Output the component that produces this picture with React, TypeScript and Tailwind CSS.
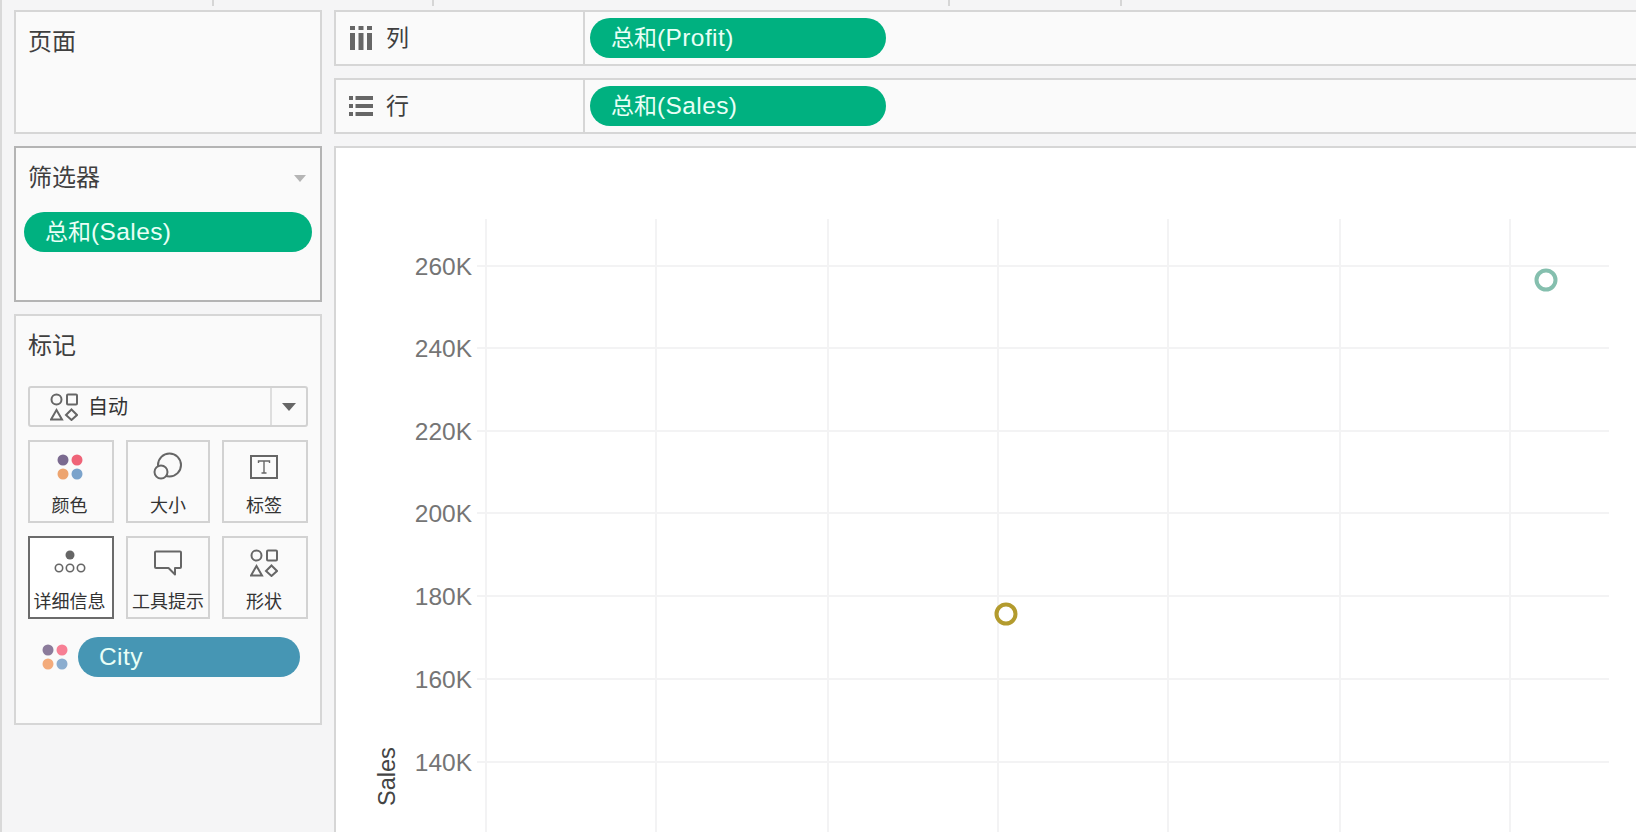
import React from "react";

const FONT = "font-['Liberation_Sans','Noto_Sans_CJK_SC',sans-serif]";

function Dots({ muted = false }: { muted?: boolean }) {
  const c = muted ? ["#8b7b9b", "#f77f94", "#f3ab7b", "#8badcf"] : ["#7a6a8f", "#ef6478", "#eda46f", "#7ba3cb"];
  return (
    <svg width="26" height="26" viewBox="0 0 26 26">
      <circle cx="6" cy="6" r="5.5" fill={c[0]} />
      <circle cx="20" cy="6" r="5.5" fill={c[1]} />
      <circle cx="6" cy="20" r="5.5" fill={c[2]} />
      <circle cx="20" cy="20" r="5.5" fill={c[3]} />
    </svg>
  );
}

function Shapes() {
  return (
    <svg width="28" height="28" viewBox="0 0 28 28" fill="none" stroke="#666" strokeWidth="2">
      <circle cx="6.5" cy="6.5" r="5" />
      <rect x="17" y="1.5" width="10" height="10" rx="1" />
      <path d="M6.5 17 L12 26.5 L1 26.5 Z" />
      <path d="M21.5 16.5 L27 22 L21.5 27 L16 22 Z" />
    </svg>
  );
}

function SizeIcon() {
  return (
    <svg width="30" height="30" viewBox="0 0 30 30" fill="none" stroke="#666" strokeWidth="2">
      <circle cx="16.5" cy="13" r="11.5" />
      <circle cx="8" cy="20" r="6.5" fill="#fafafa" />
    </svg>
  );
}

function LabelIcon() {
  return (
    <svg width="28" height="24" viewBox="0 0 28 24" fill="none">
      <rect x="1" y="1" width="26" height="22" stroke="#666" strokeWidth="2" />
      <path d="M8.5 8 V6 H19.5 V8 M14 6 V18 M11.5 18 H16.5" stroke="#666" strokeWidth="1.4" />
    </svg>
  );
}

function DetailIcon() {
  return (
    <svg width="32" height="26" viewBox="0 0 32 26" fill="none" stroke="#666" strokeWidth="1.6">
      <circle cx="16" cy="5" r="4.5" fill="#666" stroke="none" />
      <circle cx="5" cy="18" r="3.7" />
      <circle cx="16" cy="18" r="3.7" />
      <circle cx="27" cy="18" r="3.7" />
    </svg>
  );
}

function TooltipIcon() {
  return (
    <svg width="28" height="26" viewBox="0 0 28 26" fill="none" stroke="#666" strokeWidth="2" strokeLinejoin="round">
      <path d="M2 1.5 H26 A1 1 0 0 1 27 2.5 V17 A1 1 0 0 1 26 18 H21 V24.5 L14.5 18 H2 A1 1 0 0 1 1 17 V2.5 A1 1 0 0 1 2 1.5 Z" />
    </svg>
  );
}

function Pill({ prefix, text, className }: { prefix?: string; text: string; className: string }) {
  return (
    <div className={`flex h-10 items-center rounded-full pl-[21px] leading-none text-[#e9fff6] ${className}`}>
      {prefix && <span className="text-[23px]">{prefix}</span>}
      <span className="text-[24.5px] tracking-[0.4px]">{text}</span>
    </div>
  );
}

function Panel({ title, className, caret, children }: { title: string; className: string; caret?: boolean; children?: React.ReactNode }) {
  return (
    <section className={`border-2 bg-[#fafafa] ${className}`}>
      <div className="mt-[15px] flex h-[30px] items-center justify-between pl-3 pr-[14px]">
        <span className="text-[24px] leading-none text-[#3f3f3f]">{title}</span>
        {caret && <span className="h-0 w-0 border-x-[6px] border-t-[7px] border-x-transparent border-t-[#b5b5b5]" />}
      </div>
      {children}
    </section>
  );
}

function Card({ label, icon, active, className = "" }: { label: string; icon: React.ReactNode; active?: boolean; className?: string }) {
  return (
    <div className={`flex h-[83px] flex-col items-center border-2 ${active ? "border-[#6b6b6b] bg-white" : "border-[#d2d2d2] bg-[#fafafa]"} ${className}`}>
      <div className="flex h-[50px] w-full shrink-0 items-center justify-center">{icon}</div>
      <span className="mt-[2px] whitespace-nowrap text-[18px] leading-[24px] text-[#333]">{label}</span>
    </div>
  );
}

function Shelf({ label, icon, pill }: { label: string; icon: React.ReactNode; pill: string }) {
  return (
    <div className="flex h-[56px] border-y-2 border-l-2 border-[#d6d6d6] bg-[#fafafa]">
      <div className="flex w-[249px] items-center border-r-2 border-[#d6d6d6]">
        <div className="flex w-[50px] justify-center">{icon}</div>
        <span className="text-[23px] leading-none text-[#3f3f3f]">{label}</span>
      </div>
      <div className="flex items-center pl-[5px]">
        <Pill prefix="总和" text={pill} className="w-[296px] bg-[#00b180]" />
      </div>
    </div>
  );
}

const yTicks = [
  [266, "260K"],
  [348, "240K"],
  [431, "220K"],
  [513, "200K"],
  [596, "180K"],
  [679, "160K"],
  [762, "140K"],
] as const;
const xTicks = [486, 656, 828, 998, 1168, 1340, 1510];

function Chart() {
  return (
    <svg className="block h-full w-full" viewBox="336 148 1300 684" preserveAspectRatio="xMinYMin slice">
      {xTicks.map((x) => (
        <line key={x} x1={x} x2={x} y1="219" y2="832" stroke="#f3f3f4" strokeWidth="2" />
      ))}
      {yTicks.map(([y, t]) => (
        <g key={t}>
          <line x1="477" x2="1609" y1={y} y2={y} stroke="#f3f3f4" strokeWidth="2" />
          <text x="472" y={y + 9} textAnchor="end" fontSize="24.5" fill="#757575" fontFamily="'Liberation Sans', sans-serif">
            {t}
          </text>
        </g>
      ))}
      <text transform="translate(395 806) rotate(-90)" fontSize="23.5" fill="#444" fontFamily="'Liberation Sans', sans-serif">
        Sales
      </text>
      <circle cx="1546" cy="280" r="9.5" fill="none" stroke="#85bfae" strokeWidth="4" />
      <circle cx="1006" cy="614" r="9.5" fill="none" stroke="#b39b2e" strokeWidth="4" />
    </svg>
  );
}

export default function App() {
  return (
    <div className={`flex h-[832px] w-[1636px] flex-col overflow-hidden border-l-2 border-[#d9d9d9] bg-[#f5f5f6] ${FONT}`}>
      <div className="flex h-[10px] shrink-0 items-start">
        <span className="ml-[210px] h-[6px] w-[2px] bg-[#d6d6d6]" />
        <span className="ml-[218px] h-[6px] w-[2px] bg-[#d6d6d6]" />
        <span className="ml-[514px] h-[6px] w-[2px] bg-[#d6d6d6]" />
        <span className="ml-[170px] h-[6px] w-[2px] bg-[#d6d6d6]" />
      </div>
      <div className="flex min-h-0 flex-1 gap-3 pl-3">
        <div className="flex w-[308px] shrink-0 flex-col gap-3">
          <Panel title="页面" className="h-[124px] border-[#d6d6d6]" />
          <Panel title="筛选器" caret className="h-[156px] border-[#b4b4b4]">
            <div className="mt-[19px] px-2">
              <Pill prefix="总和" text="(Sales)" className="w-[288px] bg-[#00b180]" />
            </div>
          </Panel>
          <Panel title="标记" className="h-[411px] border-[#d6d6d6]">
            <div className="mt-[25px] px-3">
              <div className="flex h-[41px] w-[280px] items-center rounded-[3px] border-2 border-[#d2d2d2]">
                <div className="flex flex-1 items-center pl-[20px]">
                  <Shapes />
                  <span className="ml-[10px] text-[20px] leading-none text-[#333]">自动</span>
                </div>
                <div className="flex h-full w-[36px] items-center justify-center border-l-2 border-[#dedede]">
                  <span className="h-0 w-0 border-x-[7px] border-t-[8px] border-x-transparent border-t-[#666]" />
                </div>
              </div>
              <div className="mt-[13px] grid w-[280px] grid-cols-[86px_84px_86px] gap-x-3 gap-y-[13px]">
                <Card label="颜色" icon={<Dots />} className="pr-[3px]" />
                <Card label="大小" icon={<SizeIcon />} />
                <Card label="标签" icon={<LabelIcon />} className="pr-[2px]" />
                <Card label="详细信息" icon={<DetailIcon />} active className="pr-[3px]" />
                <Card label="工具提示" icon={<TooltipIcon />} />
                <Card label="形状" icon={<Shapes />} className="pr-[2px]" />
              </div>
              <div className="mt-[18px] flex items-center pl-[14px]">
                <Dots muted />
                <Pill text="City" className="ml-[10px] w-[222px] bg-[#4696b4]" />
              </div>
            </div>
          </Panel>
        </div>
        <div className="flex min-w-0 flex-1 flex-col gap-3">
          <Shelf
            label="列"
            pill="(Profit)"
            icon={
              <svg width="22" height="24" viewBox="0 0 22 24" fill="#666">
                <rect x="0" y="0" width="5" height="4" />
                <rect x="8.5" y="0" width="5" height="4" />
                <rect x="17" y="0" width="5" height="4" />
                <rect x="0" y="7" width="5" height="17" />
                <rect x="8.5" y="7" width="5" height="17" />
                <rect x="17" y="7" width="5" height="17" />
              </svg>
            }
          />
          <Shelf
            label="行"
            pill="(Sales)"
            icon={
              <svg width="24" height="20" viewBox="0 0 24 20" fill="#666">
                <rect x="0" y="0" width="4" height="4" />
                <rect x="6.5" y="0" width="17.5" height="4" />
                <rect x="0" y="8" width="4" height="4" />
                <rect x="6.5" y="8" width="17.5" height="4" />
                <rect x="0" y="16" width="4" height="4" />
                <rect x="6.5" y="16" width="17.5" height="4" />
              </svg>
            }
          />
          <div className="min-h-0 flex-1 border-l-2 border-t-2 border-[#d6d6d6] bg-white">
            <Chart />
          </div>
        </div>
      </div>
    </div>
  );
}
